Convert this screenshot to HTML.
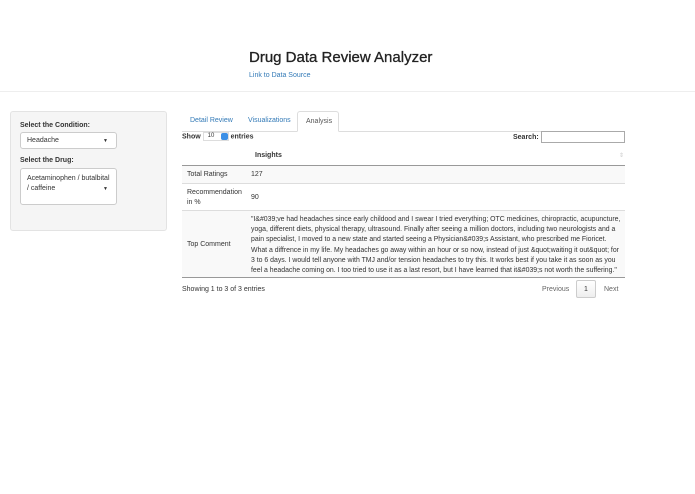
<!DOCTYPE html>
<html><head><style>
*{box-sizing:border-box;margin:0;padding:0}
body{width:695px;height:494px;background:#fff;font-family:"Liberation Sans",sans-serif;color:#333;font-size:7px;position:relative;overflow:hidden}
.a{position:absolute}
</style></head><body>
<div class="a" style="left:249px;top:49px;font-size:15px;color:#222;-webkit-text-stroke:0.3px #222">Drug Data Review Analyzer</div>
<div class="a" style="left:249px;top:72px;font-size:7px;color:#337ab7">Link to Data Source</div>
<div class="a" style="left:0;top:91px;width:695px;border-top:1px solid #eee"></div>

<div class="a" style="left:10px;top:111px;width:157px;height:120px;background:#f5f5f5;border:1px solid #e3e3e3;border-radius:3px"></div>
<div class="a" style="left:20px;top:122px;font-weight:bold">Select the Condition:</div>
<div class="a" style="left:20px;top:132px;width:97px;height:17px;background:#fff;border:1px solid #ccc;border-radius:3px;padding:4px 6px">Headache<span style="position:absolute;right:8px;top:5px;font-size:5px">▼</span></div>
<div class="a" style="left:20px;top:157px;font-weight:bold">Select the Drug:</div>
<div class="a" style="left:20px;top:168px;width:97px;height:37px;background:#fff;border:1px solid #ccc;border-radius:3px;padding:5px 6px;line-height:10px">Acetaminophen / butalbital / caffeine<span style="position:absolute;right:8px;top:15px;font-size:5px">▼</span></div>

<div class="a" style="left:182px;top:131px;width:443px;border-top:1px solid #ddd"></div>
<div class="a" style="left:190px;top:117px;color:#337ab7">Detail Review</div>
<div class="a" style="left:248px;top:117px;color:#337ab7">Visualizations</div>
<div class="a" style="left:297px;top:111px;width:42px;height:21px;background:#fff;border:1px solid #ddd;border-bottom-color:#fff;border-radius:3px 3px 0 0;padding:6px 0 0 8px;color:#555">Analysis</div>

<div class="a" style="left:182px;top:132px;font-weight:bold">Show <span style="display:inline-block;width:26px;height:9px;border:1px solid #ddd;vertical-align:middle;font-weight:normal;font-size:6px;padding-left:4px;position:relative">10<span style="position:absolute;right:0;top:0;width:7px;height:7px;background:#3b8fe6;border-radius:2px"></span></span> entries</div>
<div class="a" style="left:513px;top:134px;font-weight:bold">Search:</div>
<div class="a" style="left:541px;top:131px;width:84px;height:12px;border:1px solid #aaa"></div>

<div class="a" style="left:255px;top:152px;font-weight:bold">Insights</div>
<div class="a" style="left:619px;top:152px;color:#ccc;font-size:6px">⇕</div>
<div class="a" style="left:182px;top:165px;width:443px;border-top:1px solid #999"></div>
<div class="a" style="left:182px;top:166px;width:443px;height:18px;background:#f9f9f9;border-bottom:1px solid #ddd"></div>
<div class="a" style="left:187px;top:171px">Total Ratings</div>
<div class="a" style="left:251px;top:171px">127</div>
<div class="a" style="left:182px;top:184px;width:443px;height:27px;border-bottom:1px solid #ddd"></div>
<div class="a" style="left:187px;top:188px;line-height:10px">Recommendation<br>in %</div>
<div class="a" style="left:251px;top:194px">90</div>
<div class="a" style="left:182px;top:211px;width:443px;height:67px;background:#f9f9f9;border-bottom:1px solid #999"></div>
<div class="a" style="left:187px;top:241px">Top Comment</div>
<div class="a" style="left:251px;top:215px;width:372px;line-height:10.2px;font-size:6.9px">"I&amp;#039;ve had headaches since early childood and I swear I tried everything; OTC medicines, chiropractic, acupuncture, yoga, different diets, physical therapy, ultrasound. Finally after seeing a million doctors, including two neurologists and a pain specialist, I moved to a new state and started seeing a Physician&amp;#039;s Assistant, who prescribed me Fioricet. What a diffrence in my life. My headaches go away within an hour or so now, instead of just &amp;quot;waiting it out&amp;quot; for 3 to 6 days. I would tell anyone with TMJ and/or tension headaches to try this. It works best if you take it as soon as you feel a headache coming on. I too tried to use it as a last resort, but I have learned that it&amp;#039;s not worth the suffering."</div>

<div class="a" style="left:182px;top:286px">Showing 1 to 3 of 3 entries</div>
<div class="a" style="left:542px;top:286px;color:#666">Previous</div>
<div class="a" style="left:576px;top:280px;width:20px;height:18px;border:1px solid #ccc;border-radius:2px;background:linear-gradient(#fff,#eee);text-align:center;padding-top:5px">1</div>
<div class="a" style="left:604px;top:286px;color:#666">Next</div>
</body></html>
